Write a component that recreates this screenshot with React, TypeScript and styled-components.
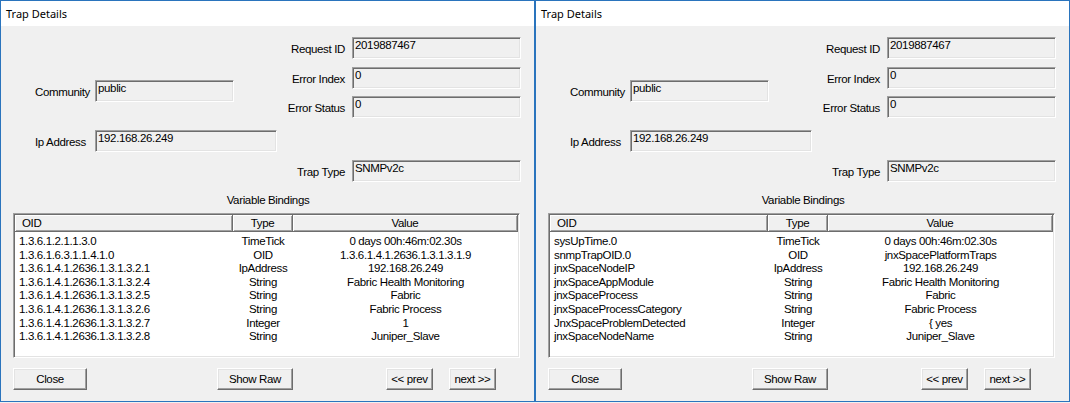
import React from "react"
import styled, { createGlobalStyle } from "styled-components"

const GlobalStyle = createGlobalStyle`
  html, body {
    margin: 0;
    padding: 0;
    background: #f0f0f0;
  }
  * {
    box-sizing: border-box;
  }
`

const Page = styled.div`
  display: flex;
  width: 1070px;
  height: 403px;
  overflow: hidden;
  font-family: "Liberation Sans", Arial, sans-serif;
  font-size: 11.5px;
  letter-spacing: -0.35px;
  color: #000;
`

const Window = styled.div`
  display: flex;
  flex-direction: column;
  width: 535px;
  height: 402px;
  border: 1px solid #2a74bd;
  background: #f0f0f0;
  flex-shrink: 0;
`

const TitleBar = styled.div`
  height: 25px;
  background: #fff;
  padding-left: 5px;
  display: flex;
  align-items: center;
  font-family: "Noto Sans", "Open Sans", sans-serif;
  font-size: 11px;
  letter-spacing: 0;
`

const Body = styled.div`
  flex: 1;
  display: flex;
  flex-direction: column;
  padding: 0 13px 0 12px;
`

const TopSection = styled.div`
  display: flex;
  justify-content: space-between;
  height: 156px;
`

const LeftCol = styled.div`
  display: flex;
  flex-direction: column;
  padding-top: 54px;
  padding-left: 22px;
`

const RightCol = styled.div`
  display: flex;
  flex-direction: column;
  padding-top: 11px;
  flex-shrink: 0;
`

const FieldRow = styled.div<{ $gap?: number }>`
  display: flex;
  align-items: center;
  margin-top: ${p => p.$gap ?? 0}px;
`

const Label = styled.div<{ $right?: boolean; $width: number }>`
  width: ${p => p.$width}px;
  text-align: ${p => (p.$right ? "right" : "left")};
  padding-right: ${p => (p.$right ? 7 : 0)}px;
  white-space: nowrap;
  padding-top: 1px;
`

const Field = styled.div<{ $width: number }>`
  width: ${p => p.$width}px;
  height: 22px;
  line-height: 15px;
  padding: 0 2px;
  background: #f0f0f0;
  border: 1px solid;
  border-color: #a0a0a0 #ffffff #ffffff #a0a0a0;
  box-shadow: inset 1px 1px 0 #6d6d6d, inset -1px -1px 0 #e3e3e3;
  white-space: nowrap;
`

const SectionTitle = styled.div`
  margin-top: 11px;
  height: 14px;
  line-height: 14px;
  text-align: center;
  padding-left: 2px;
`

const List = styled.div`
  margin-top: 6px;
  width: 507px;
  height: 145px;
  background: #fff;
  border: 1px solid;
  border-color: #a0a0a0 #ffffff #ffffff #a0a0a0;
  box-shadow: inset 1px 1px 0 #6d6d6d, inset -1px -1px 0 #e3e3e3;
  padding: 1px;
  overflow: hidden;
`

const HeaderRow = styled.div`
  display: flex;
  height: 17px;
`

const HeaderCell = styled.div<{ $width?: number; $center?: boolean }>`
  ${p => (p.$width ? `width: ${p.$width}px;` : "flex: 1;")}
  height: 17px;
  line-height: 16px;
  padding-left: ${p => (p.$center ? 0 : 7)}px;
  text-align: ${p => (p.$center ? "center" : "left")};
  background: #f0f0f0;
  border-right: 1px solid #6d6d6d;
  border-bottom: 1px solid #6d6d6d;
  box-shadow: inset 1px 1px 0 #ffffff, inset -1px -1px 0 #a0a0a0;
`

const Rows = styled.div`
  padding-top: 3px;
`

const Row = styled.div`
  display: flex;
  height: 13.6px;
  line-height: 13.6px;
  white-space: nowrap;
`

const Cell = styled.div<{ $width?: number; $center?: boolean }>`
  ${p => (p.$width ? `width: ${p.$width}px;` : "flex: 1;")}
  padding-left: ${p => (p.$center ? 0 : 4)}px;
  text-align: ${p => (p.$center ? "center" : "left")};
  overflow: hidden;
`

const ButtonRow = styled.div`
  display: flex;
  margin-top: 10px;
`

const Button = styled.button<{ $width: number; $left?: number }>`
  width: ${p => p.$width}px;
  height: 22px;
  margin-left: ${p => p.$left ?? 0}px;
  padding: 0;
  font: inherit;
  letter-spacing: inherit;
  color: #000;
  background: #f0f0f0;
  border: 1px solid;
  border-color: #ffffff #6d6d6d #6d6d6d #ffffff;
  box-shadow: inset -1px -1px 0 #a0a0a0, inset 1px 1px 0 #e3e3e3;
`

type Binding = { oid: string; type: string; value: string }

const numeric: Binding[] = [
  { oid: "1.3.6.1.2.1.1.3.0", type: "TimeTick", value: "0 days 00h:46m:02.30s" },
  { oid: "1.3.6.1.6.3.1.1.4.1.0", type: "OID", value: "1.3.6.1.4.1.2636.1.3.1.3.1.9" },
  { oid: "1.3.6.1.4.1.2636.1.3.1.3.2.1", type: "IpAddress", value: "192.168.26.249" },
  { oid: "1.3.6.1.4.1.2636.1.3.1.3.2.4", type: "String", value: "Fabric Health Monitoring" },
  { oid: "1.3.6.1.4.1.2636.1.3.1.3.2.5", type: "String", value: "Fabric" },
  { oid: "1.3.6.1.4.1.2636.1.3.1.3.2.6", type: "String", value: "Fabric Process" },
  { oid: "1.3.6.1.4.1.2636.1.3.1.3.2.7", type: "Integer", value: "1" },
  { oid: "1.3.6.1.4.1.2636.1.3.1.3.2.8", type: "String", value: "Juniper_Slave" },
]

const named: Binding[] = [
  { oid: "sysUpTime.0", type: "TimeTick", value: "0 days 00h:46m:02.30s" },
  { oid: "snmpTrapOID.0", type: "OID", value: "jnxSpacePlatformTraps" },
  { oid: "jnxSpaceNodeIP", type: "IpAddress", value: "192.168.26.249" },
  { oid: "jnxSpaceAppModule", type: "String", value: "Fabric Health Monitoring" },
  { oid: "jnxSpaceProcess", type: "String", value: "Fabric" },
  { oid: "jnxSpaceProcessCategory", type: "String", value: "Fabric Process" },
  { oid: "JnxSpaceProblemDetected", type: "Integer", value: "{ yes" },
  { oid: "jnxSpaceNodeName", type: "String", value: "Juniper_Slave" },
]

const TrapDetails = ({ bindings }: { bindings: Binding[] }) => (
  <Window>
    <TitleBar>Trap Details</TitleBar>
    <Body>
      <TopSection>
        <LeftCol>
          <FieldRow>
            <Label $width={60}>Community</Label>
            <Field $width={139}>public</Field>
          </FieldRow>
          <FieldRow $gap={28}>
            <Label $width={60}>Ip Address</Label>
            <Field $width={182}>192.168.26.249</Field>
          </FieldRow>
        </LeftCol>
        <RightCol>
          <FieldRow>
            <Label $right $width={70}>Request ID</Label>
            <Field $width={169}>2019887467</Field>
          </FieldRow>
          <FieldRow $gap={8}>
            <Label $right $width={70}>Error Index</Label>
            <Field $width={169}>0</Field>
          </FieldRow>
          <FieldRow $gap={7}>
            <Label $right $width={70}>Error Status</Label>
            <Field $width={169}>0</Field>
          </FieldRow>
          <FieldRow $gap={42}>
            <Label $right $width={70}>Trap Type</Label>
            <Field $width={169}>SNMPv2c</Field>
          </FieldRow>
        </RightCol>
      </TopSection>
      <SectionTitle>Variable Bindings</SectionTitle>
      <List>
        <HeaderRow>
          <HeaderCell $width={218}>OID</HeaderCell>
          <HeaderCell $width={60} $center>Type</HeaderCell>
          <HeaderCell $center>Value</HeaderCell>
        </HeaderRow>
        <Rows>
          {bindings.map(b => (
            <Row key={b.oid}>
              <Cell $width={218}>{b.oid}</Cell>
              <Cell $width={60} $center>{b.type}</Cell>
              <Cell $center>{b.value}</Cell>
            </Row>
          ))}
        </Rows>
      </List>
      <ButtonRow>
        <Button $width={74}>Close</Button>
        <Button $width={76} $left={130}>Show Raw</Button>
        <Button $width={47} $left={93}>&lt;&lt; prev</Button>
        <Button $width={47} $left={16}>next &gt;&gt;</Button>
      </ButtonRow>
    </Body>
  </Window>
)

export default function App() {
  return (
    <>
      <GlobalStyle />
      <Page>
        <TrapDetails bindings={numeric} />
        <TrapDetails bindings={named} />
      </Page>
    </>
  )
}
